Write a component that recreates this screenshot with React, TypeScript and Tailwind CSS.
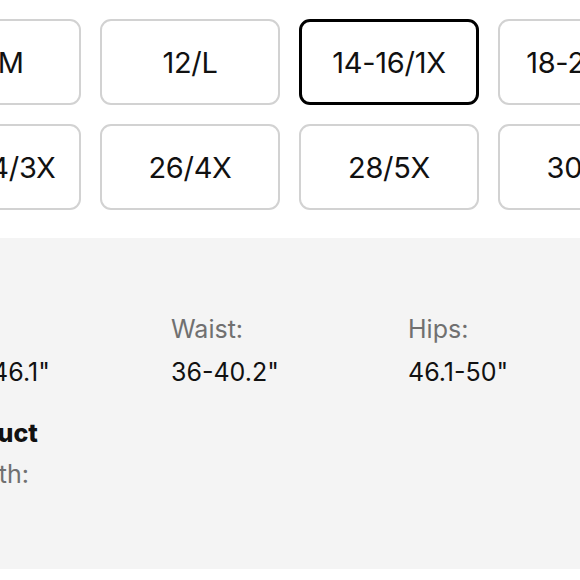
import React from "react";

const sizes = [
  ["10/M", "12/L", "14-16/1X", "18-20/2X"],
  ["22-24/3X", "26/4X", "28/5X", "30/6X"],
];

const selected = "14-16/1X";

const body = [
  { label: "Bust:", value: '42.1-46.1"' },
  { label: "Waist:", value: '36-40.2"' },
  { label: "Hips:", value: '46.1-50"' },
];

export default function App() {
  return (
    <div
      className="w-[580px] h-[580px] overflow-hidden bg-white text-[#111]"
      style={{ fontFamily: "Inter, 'Noto Sans', sans-serif" }}
    >
      {/* size picker */}
      <div className="pt-[19px] pb-[28px]">
        <div className="ml-[-99px] grid grid-cols-[repeat(4,180px)] gap-[19px] w-max">
          {sizes.flat().map((s) => (
            <button
              key={s}
              className={`h-[86px] rounded-[11px] bg-white flex items-center justify-center text-[29px] leading-none tracking-[-0.3px] ${
                s === selected ? "border-[3.5px] border-black" : "border-2 border-[#d2d2d2]"
              }`}
            >
              {s}
            </button>
          ))}
        </div>
      </div>

      {/* measurements */}
      <div className="bg-[#f4f4f4] h-[331px] pt-[76px]">
        <div className="ml-[-66px] grid grid-cols-[repeat(3,237px)] w-max">
          {body.map((m) => (
            <div key={m.label} className="flex flex-col gap-[13px]">
              <span className="text-[25px] leading-[30px] text-[#707070]">{m.label}</span>
              <span className="text-[25px] leading-[30px]">{m.value}</span>
            </div>
          ))}
        </div>

        <div className="ml-[-60px] mt-[31px] flex flex-col gap-[11px]">
          <span className="text-[25px] leading-[30px] font-extrabold">Product</span>
          <span className="text-[25px] leading-[30px] text-[#707070]">Length:</span>
        </div>
      </div>
    </div>
  );
}
